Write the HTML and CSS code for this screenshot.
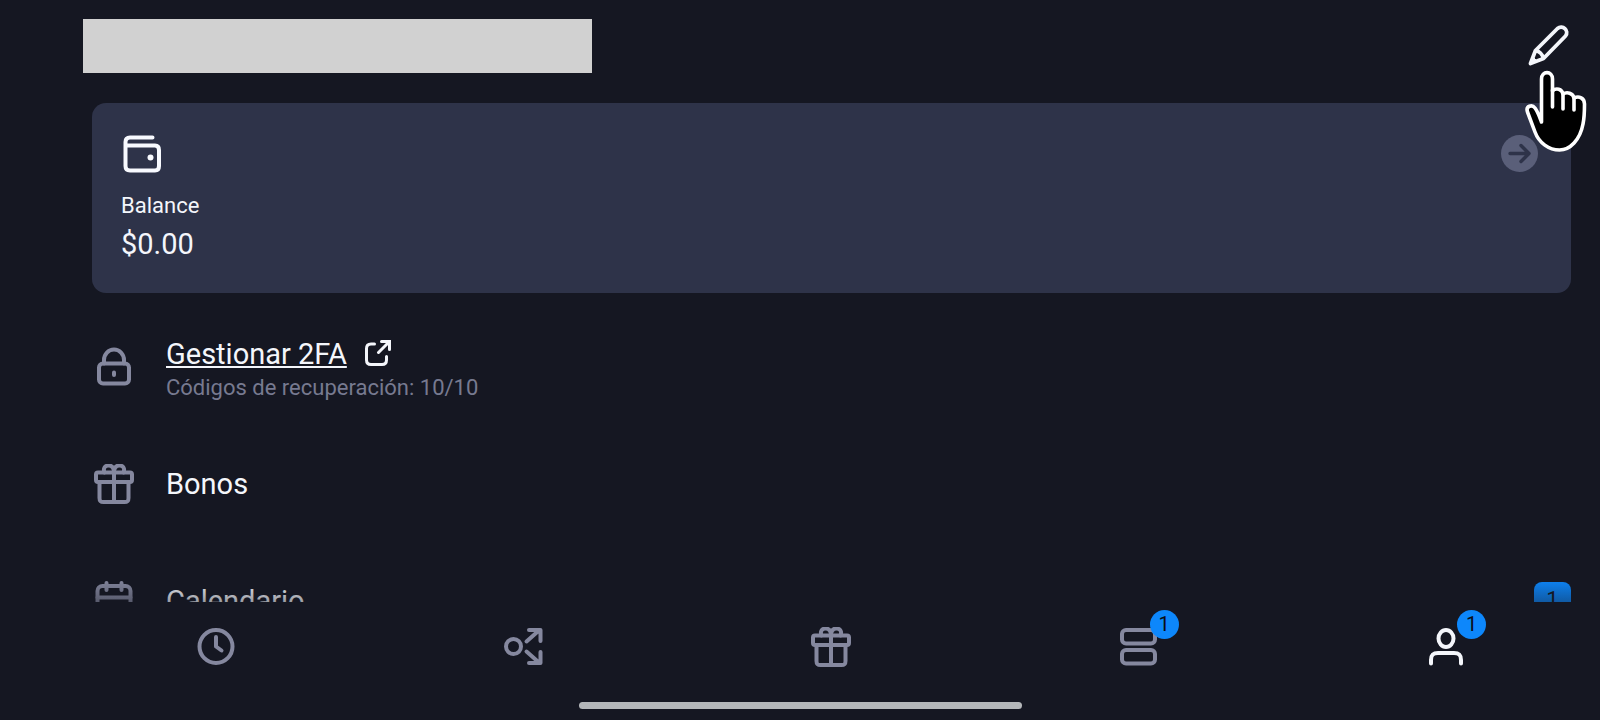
FILE: index.html
```html
<!DOCTYPE html>
<html lang="es">
<head>
    <meta charset="UTF-8">
    <meta name="viewport" content="width=device-width, initial-scale=1.0">
    <title>Perfil</title>
    <link rel="stylesheet" href="styles.css">
</head>
<body>
    <header class="top-bar">
        <div class="user-name"></div>
        <button class="edit-button" aria-label="Editar">
            <svg width="42" height="42" viewBox="0 0 42 42" fill="none" stroke="#f4f6fb" stroke-width="3.8" stroke-linejoin="round">
                <path d="M2.5 39.500L7.500 26.500L29.500 4.500C34.500 0.500 41.500 6.500 37.500 12L15.500 34.500Z"/>
                <path d="M7.500 26.500C11 27 14.500 30 15.500 34.500"/>
                <path d="M2.500 39.500L5 33L9 37Z" fill="#f4f6fb" stroke-width="1"/>
            </svg>
        </button>
        <!-- Pointer over the edit button -->
        <svg class="pointer" width="62" height="84" viewBox="0 0 62 84" fill="#000" stroke="#fff" stroke-width="3.600" stroke-linejoin="round" stroke-linecap="round">
            <path d="M16.500 52V9C16.500 0.500 27.500 0.500 27.500 9V21C31 17.500 37 19 38 24C42 21.500 48 23 49 28C54 25.500 59.500 28 59.500 34C59.500 41 59.500 47 58 54C55 70 45 80 34.500 80C24 80 14 73 10 62L2.500 42C0.500 36 7 34 10 38C13 42 14.500 47 16.500 52Z"/>
            <path d="M27.500 20V37M38 24V39M49 28V40" fill="none"/>
        </svg>
    </header>

    <main class="content">
        <a class="balance-card" href="#">
            <span class="balance-info">
                <svg width="40" height="40" viewBox="0 0 40 40" fill="none" stroke="#f8faff" stroke-width="4" stroke-linecap="round">
                    <path d="M31.500 2.500H9C6 2.500 4.500 4 4.500 7V31C4.500 34 6 35.500 9 35.500H34C37 35.500 38 34 38 31V15C38 12 37 10.500 34 10.500H5"/>
                    <circle cx="29.500" cy="22.500" r="3" fill="#f8faff" stroke="none"/>
                </svg>
                <span class="balance-label">Balance</span>
                <span class="balance-amount">$0.00</span>
            </span>
            <svg width="37" height="37" viewBox="0 0 37 37" fill="none" stroke="#2e3349" stroke-width="3.400" stroke-linecap="round" stroke-linejoin="round">
                <circle cx="18.500" cy="18.500" r="18.500" fill="#5a5f79" stroke="none"/>
                <path d="M9 18.500H28M20 10.500L28 18.500L20 26.500"/>
            </svg>
        </a>

        <ul class="menu">
            <li class="menu-item">
                <svg class="menu-icon" width="40" height="40" viewBox="0 0 40 40">
                    <rect x="5" y="16.500" width="30" height="20" rx="4"/>
                    <path d="M10 16.500V13A10 10.500 0 0 1 30 13V16.500M20 25.500V28"/>
                </svg>
                <div class="menu-text">
                    <a class="menu-link" href="#">
                        <span class="underlined">Gestionar 2FA</span>
                        <svg width="28" height="28" viewBox="0 0 28 28" fill="none" stroke="#f4f6fb" stroke-width="3" stroke-linecap="round">
                            <path d="M11.500 4H8C5 4 3.500 5.500 3.500 8.500V20C3.500 23 5 24.500 8 24.500H19C22 24.500 23.500 23 23.500 20V16.500M15.500 12.500L26 2M18.500 1.500H26.500V9.500"/>
                        </svg>
                    </a>
                    <span class="menu-note">Códigos de recuperación: 10/10</span>
                </div>
            </li>
            <li class="menu-item">
                <svg class="menu-icon" width="40" height="40" viewBox="0 0 40 40">
                    <rect x="2" y="8.500" width="36" height="9.500" rx="2"/>
                    <path d="M5.500 18V34C5.500 37 6.500 38 9.500 38H30.500C33.500 38 34.500 37 34.500 34V18M20 8.500V38M20 8.500C20 4 18 1.500 14.500 1.500C10.500 1.500 9 5 10.500 8.500M20 8.500C20 4 22 1.500 25.500 1.500C29.500 1.500 31 5 29.500 8.500"/>
                </svg>
                <a class="menu-link" href="#">Bonos</a>
            </li>
            <li class="menu-item">
                <svg class="menu-icon" width="40" height="40" viewBox="0 0 40 40">
                    <rect x="3.500" y="5" width="33" height="32" rx="5"/>
                    <path d="M3.500 16.500H36.500M12.500 2V9M27.500 2V9"/>
                </svg>
                <a class="menu-link" href="#">Calendario</a>
                <span class="menu-count">1</span>
            </li>
        </ul>
    </main>

    <nav class="bottom-nav">
        <a class="nav-item" href="#" aria-label="Historial">
            <svg width="40" height="40" viewBox="0 0 40 40">
                <circle cx="20" cy="19.500" r="16.500"/>
                <path d="M20 10V19.500L25.500 23.500"/>
            </svg>
        </a>
        <a class="nav-item" href="#" aria-label="Apuestas">
            <svg width="40" height="40" viewBox="0 0 40 40">
                <circle cx="10.500" cy="19.500" r="7.500"/>
                <path d="M23.500 14.500L36.500 3M26 3H37.500V14M23.500 24.500L36.500 36M26 36H37.500V25"/>
            </svg>
        </a>
        <a class="nav-item" href="#" aria-label="Bonos">
            <svg width="40" height="40" viewBox="0 0 40 40">
                <rect x="2" y="8.500" width="36" height="9.500" rx="2"/>
                <path d="M5.500 18V34C5.500 37 6.500 38 9.500 38H30.500C33.500 38 34.500 37 34.500 34V18M20 8.500V38M20 8.500C20 4 18 1.500 14.500 1.500C10.500 1.500 9 5 10.500 8.500M20 8.500C20 4 22 1.500 25.500 1.500C29.500 1.500 31 5 29.500 8.500"/>
            </svg>
        </a>
        <a class="nav-item" href="#" aria-label="Boletos">
            <svg width="40" height="40" viewBox="0 0 40 40">
                <rect x="3" y="3" width="33" height="13.500" rx="4"/>
                <rect x="3" y="23" width="33" height="13.500" rx="4"/>
            </svg>
            <span class="nav-badge">1</span>
        </a>
        <a class="nav-item active" href="#" aria-label="Perfil">
            <svg width="40" height="40" viewBox="0 0 40 40">
                <ellipse cx="20" cy="11.500" rx="7.500" ry="8.500"/>
                <path d="M5 36.500V33C5 28 7 26 12 26H28C33 26 35 28 35 33V36.500"/>
            </svg>
            <span class="nav-badge">1</span>
        </a>
    </nav>
    <div class="home-bar"></div>
</body>
</html>
```

FILE: styles.css
```css
* {
    box-sizing: border-box;
}
body {
    margin: 0;
    height: 100vh;
    display: flex;
    flex-direction: column;
    overflow: hidden;
    background: #151722;
    color: #f4f6fb;
    font-family: Roboto, sans-serif;
    font-size: 29px;
    line-height: 36px;
}
a {
    color: inherit;
    text-decoration: none;
}
svg {
    display: block;
    flex-shrink: 0;
}

.top-bar {
    position: relative;
    display: flex;
    justify-content: space-between;
    align-items: flex-start;
    padding: 19px 30px 30px 83px;
}
.user-name {
    width: 509px;
    height: 54px;
    background: #d1d1d1;
}
.edit-button {
    margin-top: 5px;
    padding: 0;
    border: none;
    background: none;
    cursor: pointer;
}
.pointer {
    position: absolute;
    top: 70px;
    right: 13px;
    z-index: 2;
    pointer-events: none;
}

.content {
    position: relative;
    flex: 1;
    min-height: 0;
    overflow: hidden;
    padding: 0 29px 0 92px;
}
/* Fades the list out above the navigation */
.content::after {
    content: "";
    position: absolute;
    left: 0;
    right: 0;
    bottom: 0;
    height: 24px;
    background: linear-gradient(rgba(21, 23, 34, 0), rgba(21, 23, 34, 0.4));
}
.balance-card {
    display: flex;
    justify-content: space-between;
    align-items: flex-start;
    height: 190px;
    padding: 32px 33px 0 29px;
    border-radius: 14px;
    background: #2e3349;
}
.balance-info {
    display: flex;
    flex-direction: column;
}
.balance-label {
    margin-top: 14px;
    font-size: 22px;
    line-height: 34px;
}
.balance-amount {
    margin-top: 3px;
}

.menu {
    list-style: none;
    margin: 15px 0 0;
    padding: 0;
}
.menu-item {
    display: flex;
    align-items: center;
    height: 117px;
    padding-left: 2px;
}
.menu-icon {
    margin-right: 32px;
}
.menu-icon,
.nav-item svg {
    fill: none;
    stroke: #85889f;
    stroke-width: 4;
    stroke-linecap: round;
    stroke-linejoin: round;
}
.menu-text {
    display: flex;
    flex-direction: column;
    padding-top: 6px;
}
.menu-link {
    display: flex;
    align-items: center;
    gap: 16px;
}
.underlined {
    text-decoration: underline;
    text-decoration-thickness: 2px;
    text-underline-offset: 2px;
}
.menu-note {
    color: #777a90;
    font-size: 22px;
    line-height: 32px;
}
.menu-count {
    width: 37px;
    height: 38px;
    margin-left: auto;
    border-radius: 8px;
    background: #0d87fb;
    color: #151722;
    font-size: 22px;
    line-height: 36px;
    text-align: center;
}

.bottom-nav {
    display: grid;
    grid-template-columns: repeat(5, 1fr);
    height: 100px;
    padding: 25px 0 0 62px;
}
.nav-item {
    position: relative;
    justify-self: center;
    align-self: start;
}
.nav-item.active svg {
    stroke: #f4f6fb;
}
.nav-badge {
    position: absolute;
    top: -17px;
    left: 31px;
    width: 29px;
    height: 29px;
    border-radius: 50%;
    background: #0d87fb;
    color: #0b0d14;
    font-size: 20px;
    line-height: 29px;
    text-align: center;
}
.home-bar {
    width: 443px;
    height: 7px;
    margin: 0 auto 11px;
    border-radius: 4px;
    background: #b4b7ba;
}
```
